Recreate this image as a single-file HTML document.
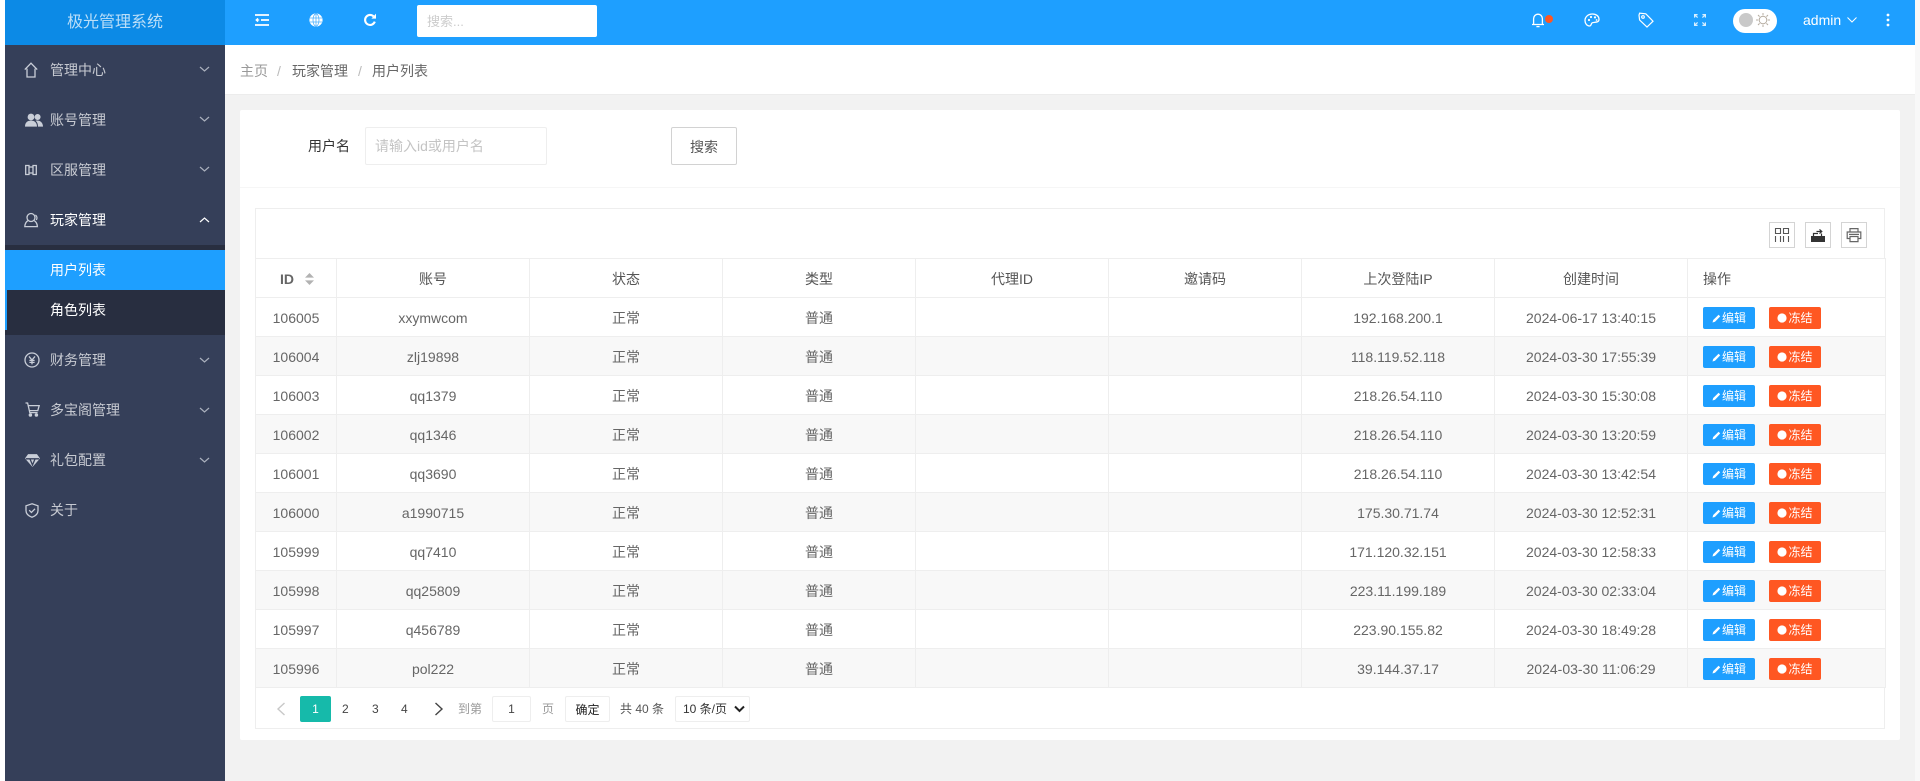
<!DOCTYPE html>
<html lang="zh-CN"><head><meta charset="utf-8"><title>极光管理系统</title>
<style>
*{box-sizing:border-box}
html,body{margin:0;padding:0}
body{width:1920px;height:781px;overflow:hidden;position:relative;background:#fff;font:14px "Liberation Sans","Noto Sans CJK SC",sans-serif;color:#666}
.a{position:absolute}
.t{position:absolute;white-space:nowrap;line-height:20px}
#right{left:1915px;top:0;width:5px;height:781px;background:#f8f8f8}
#main{left:225px;top:45px;width:1690px;height:736px;background:#f2f2f2}
#crumb{left:225px;top:45px;width:1690px;height:50px;background:#fff;border-bottom:1px solid #ececec}
#top{left:225px;top:0;width:1690px;height:45px;background:#1e9fff}
#logo{left:5px;top:0;width:220px;height:45px;background:#0c8ae6;color:#bcdff8;font-size:16px;line-height:45px;text-align:center}
#side{left:5px;top:45px;width:220px;height:736px;background:#353f59}
.m{position:absolute;left:45px;color:rgba(255,255,255,.72);line-height:20px;white-space:nowrap}
.ic{position:absolute;fill:none;stroke:#c9ced8;stroke-width:1.3}
.ch{position:absolute;left:193px;width:13px;height:8px;fill:none;stroke:#aab0bd;stroke-width:1.2}
#card{left:240px;top:110px;width:1660px;height:630px;background:#fff;border-radius:2px}
#tb{left:255px;top:208px;width:1630px;height:521px;border:1px solid #eee}
table{position:absolute;left:255px;top:258px;width:1630px;border-collapse:collapse;table-layout:fixed;background:#fff}
th,td{height:39px;padding:2px 0 0;border:1px solid #eee;text-align:center;font-weight:400;color:#666;font-size:14px;overflow:hidden;white-space:nowrap}
th{color:#555}
tr:nth-child(odd) td{background:#fff}
tbody tr:nth-child(even) td{background:#f8f8f8}
.o{text-align:left;padding-left:15px}
.b{display:inline-block;width:52px;height:22px;line-height:22px;border-radius:2px;color:#fff;font-size:12px;text-align:center;vertical-align:middle;background:#1e9fff;position:relative}
.b+.b{background:#ff5722;margin-left:14px}
.b svg{vertical-align:-1px;margin-right:1px}
.tool{position:absolute;top:222px;width:26px;height:26px;border:1px solid #d4d4d4}
.tool svg{position:absolute;left:4px;top:4px}
.pg{font-size:12px;color:#333;text-align:center}
</style></head><body>
<div class="a" id="main"></div>
<div class="a" id="right"></div>
<div class="a" id="crumb"></div>
<div class="a" id="top"></div>
<div class="a" id="logo">极光管理系统</div>

<svg class="a" style="left:255px;top:14px" width="14" height="12" viewBox="0 0 14 12" fill="none" stroke="#fff" stroke-width="1.8"><path d="M0 1H14M6 6H14M0 11H14"/><path d="M4.2 6H1.4M3 4.4L1.2 6L3 7.6" stroke-width="1.3"/></svg>
<svg class="a" style="left:309px;top:13px" width="14" height="14" viewBox="0 0 14 14"><circle cx="7" cy="7" r="6.6" fill="#fff"/><g fill="none" stroke="#4eb1fd" stroke-width=".8"><ellipse cx="7" cy="7" rx="3" ry="6.2"/><path d="M.8 5H13.2M.8 9H13.2M7 .8V13.2"/></g></svg>
<svg class="a" style="left:363px;top:13px" width="14" height="14" viewBox="0 0 14 14" fill="none" stroke="#fff" stroke-width="2.1"><path d="M11.8 8.6A5 5 0 1 1 10.6 3.4"/><path d="M13 .6V5.6H8.4Z" fill="#fff" stroke="none"/></svg>
<div class="a" style="left:417px;top:5px;width:180px;height:32px;background:#fff;border-radius:2px"></div>
<div class="t" style="left:427px;top:12px;color:#ccc;font-size:13px">搜索...</div>

<svg class="a" style="left:1531px;top:12px" width="14" height="16" viewBox="0 0 14 16" fill="none" stroke="#fff" stroke-width="1.3"><path d="M1 12.5H13M2.6 12.5V6.6A4.4 4.4 0 0 1 11.4 6.6V12.5"/><path d="M5.4 14.6H8.6"/></svg>
<div class="a" style="left:1545px;top:15px;width:8px;height:8px;border-radius:50%;background:#ff5722"></div>
<svg class="a" style="left:1584px;top:13px" width="16" height="14" viewBox="0 0 16 14" fill="none" stroke="#fff" stroke-width="1.3"><path d="M8.5 1C4 1 1 4 1 7.5C1 10.5 3 13 5.5 13C7.5 13 6.8 10.6 8.2 9.8C10 8.9 15 10 15 6.5C15 3 12 1 8.5 1Z"/><circle cx="5" cy="7" r="1.1" fill="#fff" stroke="none"/><circle cx="7" cy="4" r="1.1" fill="#fff" stroke="none"/><circle cx="11" cy="4.4" r="1.1" fill="#fff" stroke="none"/><circle cx="12.6" cy="7" r=".9" fill="#fff" stroke="none"/></svg>
<svg class="a" style="left:1638px;top:12px" width="16" height="16" viewBox="0 0 16 16" fill="none" stroke="#fff" stroke-width="1.2"><path d="M1 3.2L1.6 1.2L7.8 1.8L15 9.2L9 15L1.6 8Z"/><circle cx="5" cy="5" r="1.3"/></svg>
<svg class="a" style="left:1694px;top:14px" width="12" height="12" viewBox="0 0 12 12" fill="none" stroke="#d8efff" stroke-width="1.2"><path d="M.6 3.6V.6H3.6M8.4.6H11.4V3.6M11.4 8.4V11.4H8.4M3.6 11.4H.6V8.4M.8.8L3.6 3.6M11.2.8L8.4 3.6M11.2 11.2L8.4 8.4M.8 11.2L3.6 8.4"/></svg>
<div class="a" style="left:1733px;top:9px;width:44px;height:24px;border-radius:12px;background:#fff"></div>
<div class="a" style="left:1739px;top:13px;width:14px;height:14px;border-radius:50%;background:#c9c9c9"></div>
<svg class="a" style="left:1756px;top:13px" width="14" height="14" viewBox="0 0 14 14" fill="none" stroke="#b5aca0" stroke-width="1"><circle cx="7" cy="7" r="3.8"/><path d="M7 0V2.2M7 11.8V14M0 7H2.2M11.8 7H14M2 2L3.6 3.6M10.4 10.4L12 12M2 12L3.6 10.4M10.4 3.6L12 2"/></svg>
<div class="t" style="left:1803px;top:10px;color:#fff">admin</div>
<svg class="a" style="left:1846px;top:16px" width="12" height="8" viewBox="0 0 12 8" fill="none" stroke="#fff" stroke-width="1"><path d="M1.5 1.5L6 6L10.5 1.5"/></svg>
<svg class="a" style="left:1885px;top:13px" width="6" height="14" viewBox="0 0 6 14" fill="#fff"><circle cx="3" cy="2" r="1.4"/><circle cx="3" cy="7" r="1.4"/><circle cx="3" cy="12" r="1.4"/></svg>

<div class="t" style="left:240px;top:61px;color:#999">主页</div>
<div class="t" style="left:277px;top:61px;color:#bbb">/</div>
<div class="t" style="left:292px;top:61px;color:#666">玩家管理</div>
<div class="t" style="left:358px;top:61px;color:#bbb">/</div>
<div class="t" style="left:372px;top:61px;color:#666">用户列表</div>

<div class="a" id="side">
<div class="a" style="left:0;top:200px;width:220px;height:90px;background:#282e40"></div>
<div class="a" style="left:0;top:205px;width:220px;height:40px;background:#1e9fff"></div>
<div class="a" style="left:0;top:245px;width:2px;height:40px;background:#1e9fff"></div>
<div class="m" style="top:15px">管理中心</div>
<div class="m" style="top:65px">账号管理</div>
<div class="m" style="top:115px">区服管理</div>
<div class="m" style="top:165px;color:#fff">玩家管理</div>
<div class="m" style="top:215px;color:#fff">用户列表</div>
<div class="m" style="top:255px;color:#fff">角色列表</div>
<div class="m" style="top:305px">财务管理</div>
<div class="m" style="top:355px">多宝阁管理</div>
<div class="m" style="top:405px">礼包配置</div>
<div class="m" style="top:455px">关于</div>
<svg class="ic" style="left:19px;top:17px" width="14" height="16" viewBox="0 0 14 16"><path d="M.8 7.6L7 1.2L13.2 7.6M3 6.6V15H11V6.6"/></svg>
<svg class="ic" style="left:20px;top:68px;stroke:none;fill:#c9ced8" width="18" height="14" viewBox="0 0 18 14"><circle cx="6" cy="4" r="3.4"/><circle cx="12.6" cy="4" r="3"/><path d="M0 13.6C0 9 3 7.6 6 7.6S12 9 12 13.6ZM13 13.6C13 10.6 12 9 10.6 7.8C14 6.8 18 9 18 13.6Z"/></svg>
<svg class="ic" style="left:20px;top:119px" width="12" height="12" viewBox="0 0 12 12"><path d="M.7 1.5H4V10.5H.7ZM8 1.5H11.3V10.5H8ZM4 3H8M4 9H8"/></svg>
<svg class="ic" style="left:19px;top:167px" width="15" height="16" viewBox="0 0 15 16"><circle cx="7" cy="5.5" r="4"/><path d="M4.2 8.4C2.4 9.4 1 11 .8 14.6H13.4C13.2 11 11.8 9.4 9.8 8.4"/><path d="M11.4 3C13 4 13.4 6 12.4 8"/></svg>
<svg class="ic" style="left:19px;top:307px" width="16" height="16" viewBox="0 0 16 16"><circle cx="8" cy="8" r="7"/><path d="M5 4.4L8 8L11 4.4M8 8V12.4M5.4 8.4H10.6M5.4 10.4H10.6"/></svg>
<svg class="ic" style="left:20px;top:357px" width="15" height="15" viewBox="0 0 15 15"><path d="M.5 1H2.6L4.8 10.6H12.6M3.4 3.6H14.2L12.8 8.6H4.4"/><circle cx="5.4" cy="13" r="1.1" fill="#c9ced8"/><circle cx="11.4" cy="13" r="1.1" fill="#c9ced8"/></svg>
<svg class="ic" style="left:20px;top:409px;fill:#c9ced8" width="15" height="13" viewBox="0 0 15 13"><path d="M3.4.8H11.6L14.2 4.4L7.5 12L.8 4.4Z"/><path d="M.8 4.8H14.2M5 5L7.5 11L10 5" stroke="#353f59"/></svg>
<svg class="ic" style="left:20px;top:458px" width="14" height="15" viewBox="0 0 14 15"><path d="M7 .8L13 2.8V7.6C13 11 10.4 13 7 14.2C3.6 13 1 11 1 7.6V2.8Z"/><path d="M4.2 7.2L6.4 9.4L10 5.8"/></svg>
<svg class="ch" style="top:20px" viewBox="0 0 13 8"><path d="M2 2L6.5 6L11 2"/></svg>
<svg class="ch" style="top:70px" viewBox="0 0 13 8"><path d="M2 2L6.5 6L11 2"/></svg>
<svg class="ch" style="top:120px" viewBox="0 0 13 8"><path d="M2 2L6.5 6L11 2"/></svg>
<svg class="ch" style="top:171px;stroke:#fff" viewBox="0 0 13 8"><path d="M2 6L6.5 2L11 6"/></svg>
<svg class="ch" style="top:311px" viewBox="0 0 13 8"><path d="M2 2L6.5 6L11 2"/></svg>
<svg class="ch" style="top:361px" viewBox="0 0 13 8"><path d="M2 2L6.5 6L11 2"/></svg>
<svg class="ch" style="top:411px" viewBox="0 0 13 8"><path d="M2 2L6.5 6L11 2"/></svg>
</div>

<div class="a" id="card"></div>
<div class="a" style="left:240px;top:187px;width:1660px;height:1px;background:#f6f6f6"></div>
<div class="t" style="left:308px;top:136px;color:#333">用户名</div>
<div class="a" style="left:365px;top:127px;width:182px;height:38px;border:1px solid #eee;border-radius:2px"></div>
<div class="t" style="left:375px;top:136px;color:#c4c4c4">请输入id或用户名</div>
<div class="a" style="left:671px;top:127px;width:66px;height:38px;border:1px solid #d2d2d2;border-radius:2px;line-height:38px;text-align:center;color:#555">搜索</div>

<div class="a" id="tb"></div>
<div class="tool" style="left:1769px"><svg width="16" height="16" viewBox="0 0 16 16" fill="none" stroke="#555" stroke-width="1.1"><path d="M1.5 1.5H6.5V6.5H1.5ZM9.5 1.5H14.5V6.5H9.5ZM1.5 9V15M6.5 9V15M9.5 9V15M14.5 9V15"/></svg></div>
<div class="tool" style="left:1805px"><svg width="16" height="16" viewBox="0 0 16 16"><path d="M1 9H15V15H1Z" fill="#333"/><path d="M3.5 9V6.5H8M6.5 4.5H11.5M9.5 2.4L11.8 4.5L9.5 6.6M11.5 9V6.5" fill="none" stroke="#333" stroke-width="1.2"/></svg></div>
<div class="tool" style="left:1841px"><svg width="16" height="16" viewBox="0 0 16 16" fill="none" stroke="#666" stroke-width="1.2"><path d="M4 5V1.6H12V5M4 11.5H1.2V5H14.8V11.5H12M4 9.5H12V14.6H4Z"/><path d="M3 7.4H13"/></svg></div>

<table>
<colgroup><col style="width:81px"><col style="width:193px"><col style="width:193px"><col style="width:193px"><col style="width:193px"><col style="width:193px"><col style="width:193px"><col style="width:193px"><col style="width:198px"></colgroup>
<thead><tr><th style="padding-left:3px"><b style="color:#666">ID</b><svg width="11" height="14" viewBox="0 0 11 14" style="margin-left:10px;vertical-align:-2px"><path d="M5.5 1L10 5.6H1ZM5.5 13L1 8.4H10Z" fill="#b2b2b2"/></svg></th><th>账号</th><th>状态</th><th>类型</th><th>代理ID</th><th>邀请码</th><th>上次登陆IP</th><th>创建时间</th><th class="o">操作</th></tr></thead>
<tbody>
<tr><td>106005</td><td>xxymwcom</td><td>正常</td><td>普通</td><td></td><td></td><td>192.168.200.1</td><td>2024-06-17 13:40:15</td><td class="o"><span class="b"><svg width="9" height="9" viewBox="0 0 9 9"><path d="M.5 8.5L1.2 6L6.6.8L8.2 2.4L3 7.8Z" fill="#fff"/></svg>编辑</span><span class="b"><svg width="10" height="10" viewBox="0 0 10 10"><circle cx="5" cy="5" r="4.6" fill="#fff"/></svg>冻结</span></td></tr>
<tr><td>106004</td><td>zlj19898</td><td>正常</td><td>普通</td><td></td><td></td><td>118.119.52.118</td><td>2024-03-30 17:55:39</td><td class="o"><span class="b"><svg width="9" height="9" viewBox="0 0 9 9"><path d="M.5 8.5L1.2 6L6.6.8L8.2 2.4L3 7.8Z" fill="#fff"/></svg>编辑</span><span class="b"><svg width="10" height="10" viewBox="0 0 10 10"><circle cx="5" cy="5" r="4.6" fill="#fff"/></svg>冻结</span></td></tr>
<tr><td>106003</td><td>qq1379</td><td>正常</td><td>普通</td><td></td><td></td><td>218.26.54.110</td><td>2024-03-30 15:30:08</td><td class="o"><span class="b"><svg width="9" height="9" viewBox="0 0 9 9"><path d="M.5 8.5L1.2 6L6.6.8L8.2 2.4L3 7.8Z" fill="#fff"/></svg>编辑</span><span class="b"><svg width="10" height="10" viewBox="0 0 10 10"><circle cx="5" cy="5" r="4.6" fill="#fff"/></svg>冻结</span></td></tr>
<tr><td>106002</td><td>qq1346</td><td>正常</td><td>普通</td><td></td><td></td><td>218.26.54.110</td><td>2024-03-30 13:20:59</td><td class="o"><span class="b"><svg width="9" height="9" viewBox="0 0 9 9"><path d="M.5 8.5L1.2 6L6.6.8L8.2 2.4L3 7.8Z" fill="#fff"/></svg>编辑</span><span class="b"><svg width="10" height="10" viewBox="0 0 10 10"><circle cx="5" cy="5" r="4.6" fill="#fff"/></svg>冻结</span></td></tr>
<tr><td>106001</td><td>qq3690</td><td>正常</td><td>普通</td><td></td><td></td><td>218.26.54.110</td><td>2024-03-30 13:42:54</td><td class="o"><span class="b"><svg width="9" height="9" viewBox="0 0 9 9"><path d="M.5 8.5L1.2 6L6.6.8L8.2 2.4L3 7.8Z" fill="#fff"/></svg>编辑</span><span class="b"><svg width="10" height="10" viewBox="0 0 10 10"><circle cx="5" cy="5" r="4.6" fill="#fff"/></svg>冻结</span></td></tr>
<tr><td>106000</td><td>a1990715</td><td>正常</td><td>普通</td><td></td><td></td><td>175.30.71.74</td><td>2024-03-30 12:52:31</td><td class="o"><span class="b"><svg width="9" height="9" viewBox="0 0 9 9"><path d="M.5 8.5L1.2 6L6.6.8L8.2 2.4L3 7.8Z" fill="#fff"/></svg>编辑</span><span class="b"><svg width="10" height="10" viewBox="0 0 10 10"><circle cx="5" cy="5" r="4.6" fill="#fff"/></svg>冻结</span></td></tr>
<tr><td>105999</td><td>qq7410</td><td>正常</td><td>普通</td><td></td><td></td><td>171.120.32.151</td><td>2024-03-30 12:58:33</td><td class="o"><span class="b"><svg width="9" height="9" viewBox="0 0 9 9"><path d="M.5 8.5L1.2 6L6.6.8L8.2 2.4L3 7.8Z" fill="#fff"/></svg>编辑</span><span class="b"><svg width="10" height="10" viewBox="0 0 10 10"><circle cx="5" cy="5" r="4.6" fill="#fff"/></svg>冻结</span></td></tr>
<tr><td>105998</td><td>qq25809</td><td>正常</td><td>普通</td><td></td><td></td><td>223.11.199.189</td><td>2024-03-30 02:33:04</td><td class="o"><span class="b"><svg width="9" height="9" viewBox="0 0 9 9"><path d="M.5 8.5L1.2 6L6.6.8L8.2 2.4L3 7.8Z" fill="#fff"/></svg>编辑</span><span class="b"><svg width="10" height="10" viewBox="0 0 10 10"><circle cx="5" cy="5" r="4.6" fill="#fff"/></svg>冻结</span></td></tr>
<tr><td>105997</td><td>q456789</td><td>正常</td><td>普通</td><td></td><td></td><td>223.90.155.82</td><td>2024-03-30 18:49:28</td><td class="o"><span class="b"><svg width="9" height="9" viewBox="0 0 9 9"><path d="M.5 8.5L1.2 6L6.6.8L8.2 2.4L3 7.8Z" fill="#fff"/></svg>编辑</span><span class="b"><svg width="10" height="10" viewBox="0 0 10 10"><circle cx="5" cy="5" r="4.6" fill="#fff"/></svg>冻结</span></td></tr>
<tr><td>105996</td><td>pol222</td><td>正常</td><td>普通</td><td></td><td></td><td>39.144.37.17</td><td>2024-03-30 11:06:29</td><td class="o"><span class="b"><svg width="9" height="9" viewBox="0 0 9 9"><path d="M.5 8.5L1.2 6L6.6.8L8.2 2.4L3 7.8Z" fill="#fff"/></svg>编辑</span><span class="b"><svg width="10" height="10" viewBox="0 0 10 10"><circle cx="5" cy="5" r="4.6" fill="#fff"/></svg>冻结</span></td></tr>
</tbody></table>

<svg class="a" style="left:276px;top:702px" width="10" height="14" viewBox="0 0 10 14" fill="none" stroke="#c8c8c8" stroke-width="1.4"><path d="M8.5 1L2 7L8.5 13"/></svg>
<div class="a pg" style="left:300px;top:696px;width:31px;height:26px;line-height:26px;background:#16baaa;border-radius:2px;color:#fff">1</div>
<div class="t pg" style="left:342px;top:699px;color:#444">2</div>
<div class="t pg" style="left:372px;top:699px;color:#444">3</div>
<div class="t pg" style="left:401px;top:699px;color:#444">4</div>
<svg class="a" style="left:434px;top:702px" width="10" height="14" viewBox="0 0 10 14" fill="none" stroke="#444" stroke-width="1.4"><path d="M1.5 1L8 7L1.5 13"/></svg>
<div class="t pg" style="left:458px;top:699px;color:#999">到第</div>
<div class="a pg" style="left:492px;top:696px;width:39px;height:26px;line-height:24px;border:1px solid #eee;border-radius:2px;color:#444">1</div>
<div class="t pg" style="left:542px;top:699px;color:#999">页</div>
<div class="a pg" style="left:565px;top:696px;width:45px;height:26px;line-height:26px;border:1px solid #eee;border-radius:2px;color:#222">确定</div>
<div class="t pg" style="left:620px;top:699px;color:#555">共 40 条</div>
<div class="a pg" style="left:675px;top:696px;width:75px;height:26px;line-height:24px;border:1px solid #eee;border-radius:2px;text-align:left;padding-left:7px;color:#333">10 条/页</div>
<svg class="a" style="left:734px;top:705px" width="11" height="8" viewBox="0 0 11 8" fill="none" stroke="#222" stroke-width="2"><path d="M1 1.5L5.5 6L10 1.5"/></svg>
</body></html>
